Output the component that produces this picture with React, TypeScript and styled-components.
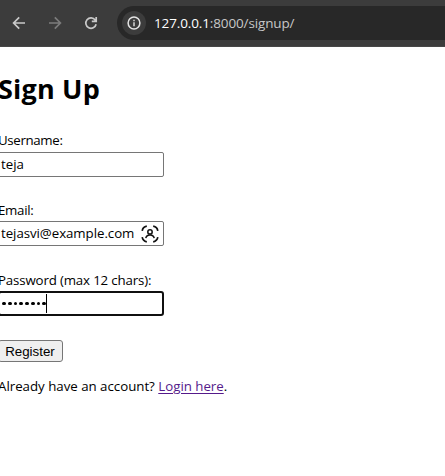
import React from "react";
import styled, { createGlobalStyle } from "styled-components";

const GlobalStyle = createGlobalStyle`
  * { box-sizing: border-box; }
  html, body { margin: 0; background: #fff; overflow: hidden; }
`;

const Window = styled.div`
  width: 100%;
  height: 476px;
  overflow: hidden;
  background: #fff;
  color: #000;
  font-family: "Open Sans", sans-serif;
  font-size: 13.3px;
`;

const Toolbar = styled.header`
  display: flex;
  align-items: center;
  height: 47px;
  padding: 0 0 1px 11px;
  background: #3c3c3c;
  border-bottom: 1px solid #474747;
`;

const NavButton = styled.span<{ $dim?: boolean }>`
  display: flex;
  width: 16px;
  height: 16px;
  margin-right: 20px;
  color: ${(p) => (p.$dim ? "#7c7c7c" : "#c9c9c9")};
`;

const AddressBar = styled.div`
  display: flex;
  flex: 1;
  align-items: center;
  height: 34px;
  margin-left: -2px;
  padding-left: 5px;
  border-radius: 17px 0 0 17px;
  background: #282828;
`;

const SiteInfo = styled.span`
  display: flex;
  align-items: center;
  justify-content: center;
  width: 24px;
  height: 24px;
  border-radius: 50%;
  background: #3c3c3c;
  color: #e3e3e3;
`;

const Url = styled.span`
  margin-left: 8px;
  color: #c7c7c7;
  font-size: 13.5px;
  line-height: 20px;
  letter-spacing: -0.13px;
  white-space: nowrap;
`;

const Host = styled.span`
  color: #fff;
`;

const Page = styled.main`
  padding-top: 24px;
  margin-left: -2px;
`;

const Title = styled.h1`
  margin: 0 0 24px;
  font-size: 27px;
  font-weight: 700;
  line-height: 36px;
  letter-spacing: 0.2px;
`;

const Field = styled.div`
  display: flex;
  flex-direction: column;
  width: 166px;
  height: 70px;
`;

const Label = styled.label<{ $spacing?: number; $height?: number }>`
  height: ${(p) => p.$height ?? 20}px;
  line-height: 19px;
  letter-spacing: ${(p) => p.$spacing ?? 0}px;
  white-space: nowrap;
`;

const InputBox = styled.div<{ $focused?: boolean }>`
  display: flex;
  align-items: center;
  height: 25px;
  padding-left: ${(p) => (p.$focused ? 2 : 2)}px;
  padding-right: 4px;
  border: ${(p) => (p.$focused ? "2px solid #101010" : "1px solid #767676")};
  border-radius: ${(p) => (p.$focused ? 3 : 2)}px;
  line-height: 19px;
`;

const Value = styled.span<{ $spacing?: number }>`
  flex: 1;
  letter-spacing: ${(p) => p.$spacing ?? 0}px;
  white-space: nowrap;
`;

const Dots = styled.span`
  display: flex;
  gap: 2px;
`;

const Dot = styled.span`
  width: 3.75px;
  height: 3.75px;
  border-radius: 50%;
  background: #000;
`;

const Caret = styled.span`
  width: 1px;
  height: 19px;
  background: #000;
`;

const RegisterButton = styled.button`
  display: block;
  width: 65px;
  height: 22px;
  margin: -1px 0 0;
  padding: 0 1px 0 0;
  border: 1px solid #767676;
  border-radius: 3px;
  background: #efefef;
  color: #000;
  font: 13.333px/19px "Liberation Sans", sans-serif;
`;

const Footer = styled.p`
  margin: 14px 0 0;
  line-height: 20px;
  letter-spacing: -0.02px;
  white-space: nowrap;
`;

const Link = styled.a`
  color: #551a8b;
  text-decoration: underline;
  text-underline-offset: 2px;
`;

const BackIcon = () => (
  <svg width="16" height="16" viewBox="0 0 16 16" fill="none" stroke="currentColor" strokeWidth="1.7">
    <path d="M14 8H3M8.2 2.4 2.6 8l5.6 5.6" />
  </svg>
);

const ForwardIcon = () => (
  <svg width="16" height="16" viewBox="0 0 16 16" fill="none" stroke="currentColor" strokeWidth="1.7">
    <path d="M2 8h11M7.8 2.4 13.4 8l-5.6 5.6" />
  </svg>
);

const ReloadIcon = () => (
  <svg width="16" height="16" viewBox="0 0 16 16" fill="none" stroke="currentColor" strokeWidth="1.7">
    <path d="M13.1 9.2A5.2 5.2 0 1 1 12.2 5l1 1.2M13.2 2v4.4H8.8" />
  </svg>
);

const InfoIcon = () => (
  <svg width="14" height="14" viewBox="0 0 14 14" fill="none" stroke="currentColor">
    <circle cx="7" cy="7" r="5.9" strokeWidth="1.5" />
    <path d="M7 6.3v3.9M7 3.8v1.4" strokeWidth="1.4" />
  </svg>
);

const AutofillIcon = () => (
  <svg width="18" height="18" viewBox="0 0 18 18" fill="none" stroke="#111" strokeWidth="1.7">
    <path d="M1.2 5.8Q1.8 2 5.8 1.2M12.2 1.2q4 .8 4.6 4.6M16.8 12.2q-.6 3.8-4.6 4.6M5.8 16.8Q1.8 16 1.2 12.2" />
    <circle cx="9" cy="6.9" r="2.2" strokeWidth="1.5" />
    <path d="M4.8 13.1Q5.3 9.9 9 9.9t4.2 3.2" strokeWidth="1.5" />
  </svg>
);

export default function App() {
  return (
    <Window>
      <GlobalStyle />
      <Toolbar>
        <NavButton><BackIcon /></NavButton>
        <NavButton $dim><ForwardIcon /></NavButton>
        <NavButton><ReloadIcon /></NavButton>
        <AddressBar>
          <SiteInfo><InfoIcon /></SiteInfo>
          <Url><Host>127.0.0.1</Host>:8000/signup/</Url>
        </AddressBar>
      </Toolbar>
      <Page>
        <Title>Sign Up</Title>
        <Field>
          <Label $spacing={-0.35} $height={21}>Username:</Label>
          <InputBox><Value>teja</Value></InputBox>
        </Field>
        <Field>
          <Label $spacing={-0.3}>Email:</Label>
          <InputBox><Value $spacing={-0.06}>tejasvi@example.com</Value><AutofillIcon /></InputBox>
        </Field>
        <Field>
          <Label $spacing={-0.16}>Password (max 12 chars):</Label>
          <InputBox $focused>
            <Dots>{Array.from({ length: 8 }, (_, i) => <Dot key={i} />)}</Dots>
            <Caret />
          </InputBox>
        </Field>
        <RegisterButton>Register</RegisterButton>
        <Footer>Already have an account? <Link>Login here</Link>.</Footer>
      </Page>
    </Window>
  );
}
